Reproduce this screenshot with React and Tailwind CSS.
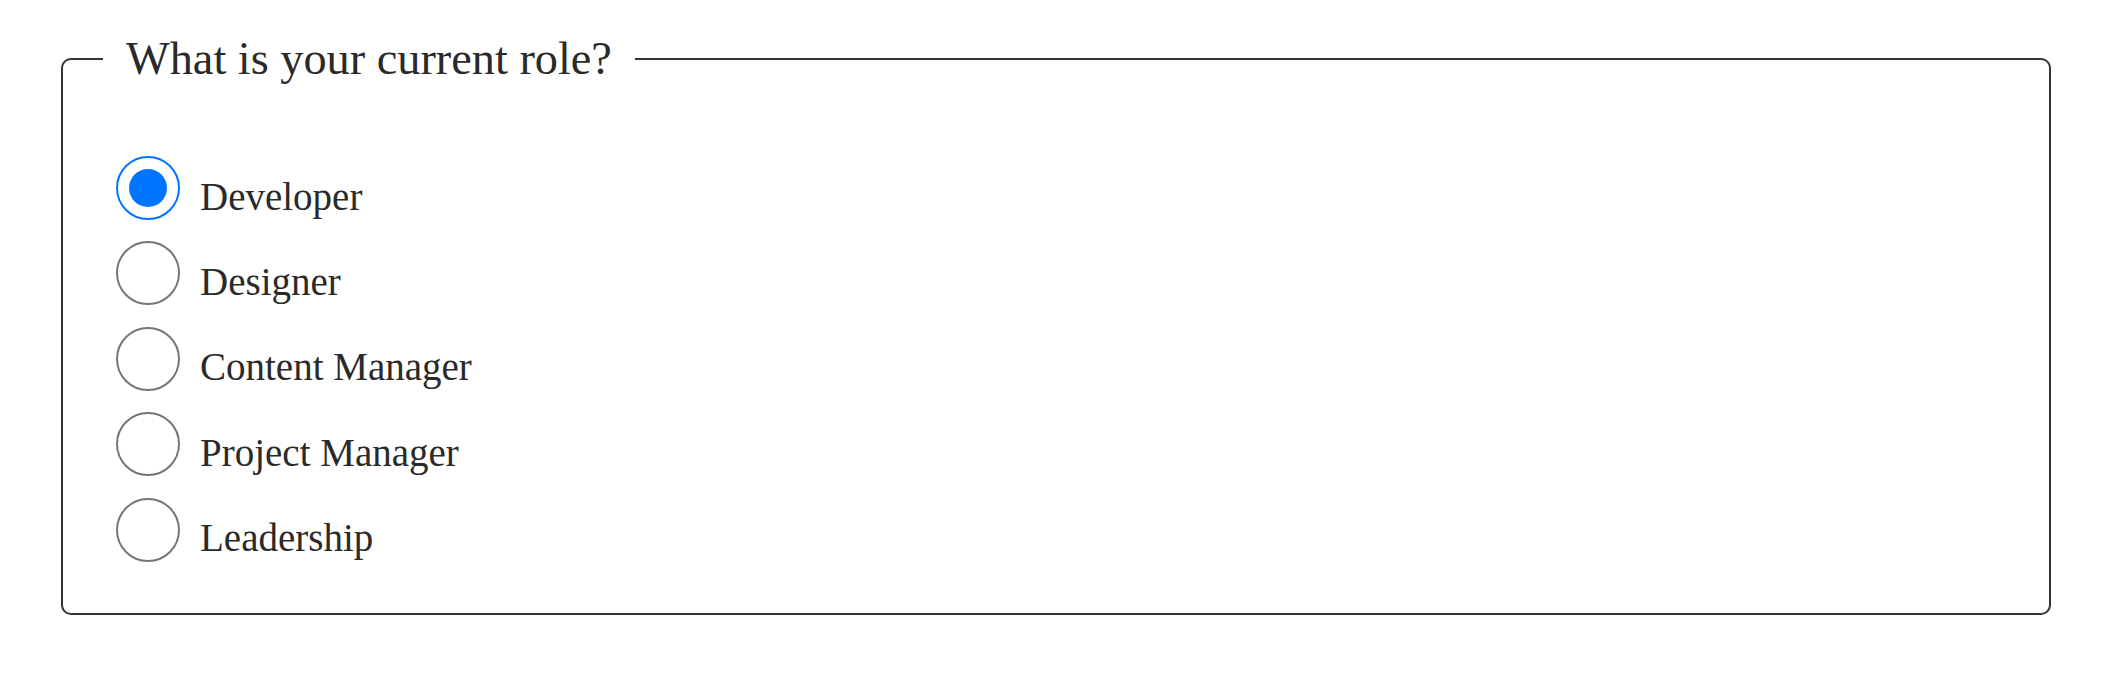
import React, { useState } from 'react';

const ROLES = ['Developer', 'Designer', 'Content Manager', 'Project Manager', 'Leadership'];

const Radio = ({ checked }) => (
  <span
    className={
      checked
        ? 'flex h-[64px] w-[64px] shrink-0 items-center justify-center rounded-full border-2 border-[#0075ff] bg-white'
        : 'flex h-[64px] w-[64px] shrink-0 items-center justify-center rounded-full border-2 border-[#767676] bg-white'
    }
  >
    {checked && <span className="block h-[38px] w-[38px] rounded-full bg-[#0075ff]" />}
  </span>
);

export default function App() {
  const [role, setRole] = useState('Developer');

  return (
    <div className="min-h-screen bg-white pt-[33px] font-['Liberation_Serif',serif] text-[#2a2a2a]">
      <fieldset className="ml-[61px] w-[1990px] rounded-[10px] border-2 border-[#333] p-0 pb-[51px]">
        <legend className="ml-[40px] px-[23px] text-[46.3px] leading-[52px]">What is your current role?</legend>

        <div className="flex flex-col gap-[21.4px] pl-[53px] pt-[71px]">
          {ROLES.map((r) => (
            <label key={r} className="flex h-[64px] cursor-pointer items-center" onClick={() => setRole(r)}>
              <Radio checked={role === r} />
              <span className="ml-[20px] pt-[16px] text-[39px] leading-[45px]">{r}</span>
            </label>
          ))}
        </div>
      </fieldset>
    </div>
  );
}
